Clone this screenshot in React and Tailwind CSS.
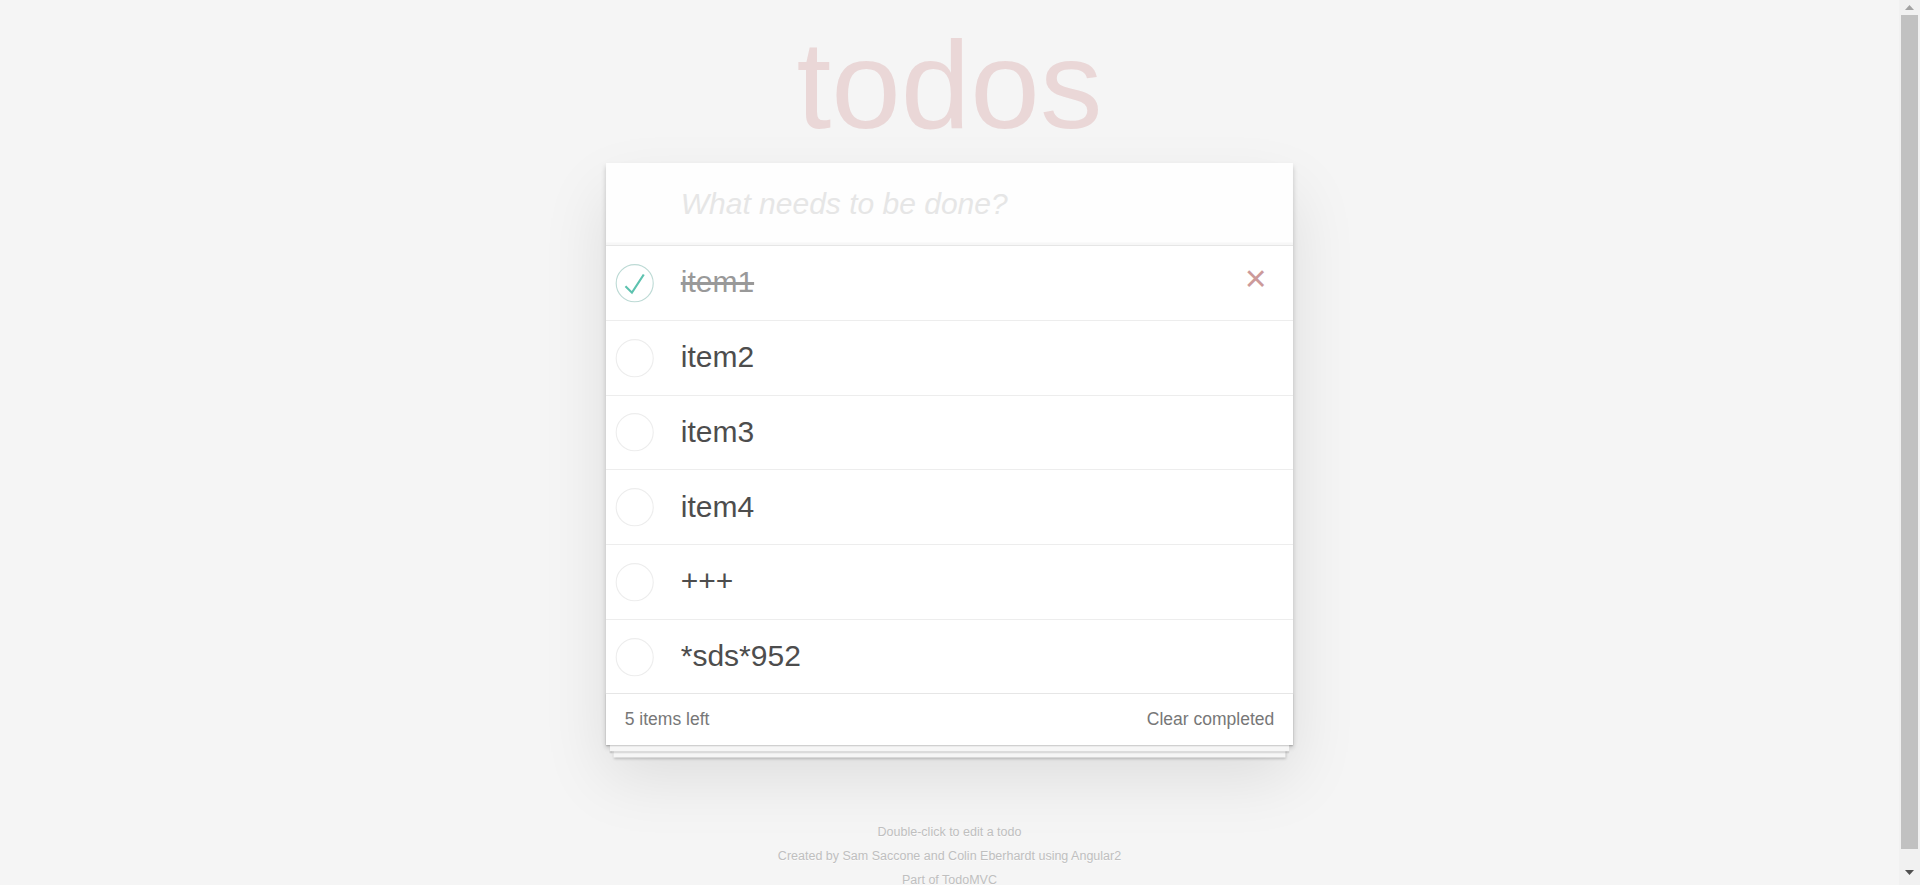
import React, { useState } from 'react';

const initialTodos = [
  { id: 1, title: 'item1', completed: true },
  { id: 2, title: 'item2', completed: false },
  { id: 3, title: 'item3', completed: false },
  { id: 4, title: 'item4', completed: false },
  { id: 5, title: '+++', completed: false },
  { id: 6, title: '*sds*952', completed: false },
];

const Toggle = ({ checked }) => (
  <svg width="50" height="50" viewBox="-10 -18 100 135" className="shrink-0">
    <circle
      cx="50"
      cy="50"
      r="50"
      fill="none"
      stroke={checked ? '#bddad5' : '#ededed'}
      strokeWidth="3"
    />
    {checked && <path fill="#5dc2af" d="M72 25L42 71 27 56l-4 4 20 20 34-52z" />}
  </svg>
);

const TodoItem = ({ todo, isLast, hovered }) => (
  <li
    className={
      'relative flex items-center bg-white ' +
      (isLast ? 'h-[73.5px]' : 'h-[74.75px] border-b-[1.25px] border-[#ededed]')
    }
  >
    <Toggle checked={todo.completed} />
    <label
      className={
        'pl-[25px] pb-[1px] text-[30px] leading-[36px] whitespace-pre ' +
        (todo.completed ? 'text-[#999] line-through' : 'text-[#4d4d4d]')
      }
    >
      {todo.title}
    </label>
    {hovered && (
      <button className="absolute top-[8px] right-[12.5px] w-[50px] h-[50px] flex items-center justify-center text-[37.5px] leading-none text-[#cc9a9a]">
        ×
      </button>
    )}
  </li>
);

const Scrollbar = () => (
  <div className="w-[21px] shrink-0 h-full bg-[#f1f1f1] flex flex-col">
    <div className="h-[15px] flex items-center justify-center">
      <svg width="9" height="5" viewBox="0 0 9 5">
        <path d="M4.5 0L9 5H0z" fill="#a3a3a3" />
      </svg>
    </div>
    <div className="h-[834px] mx-[2px] bg-[#c1c1c1]" />
    <div className="flex-1 flex items-end justify-center pb-[10px]">
      <svg width="9" height="5" viewBox="0 0 9 5">
        <path d="M0 0H9L4.5 5z" fill="#505050" />
      </svg>
    </div>
  </div>
);

export default function App() {
  const [todos] = useState(initialTodos);
  const left = todos.filter((t) => !t.completed).length;

  return (
    <div className="h-[885px] w-full flex overflow-hidden bg-[#f5f5f5] font-['Liberation_Sans',Arial,sans-serif] antialiased">
      <div className="flex-1 min-w-0 flex flex-col items-center pt-[22px]">
        <h1 className="h-[125px] text-[125px] leading-[125px] font-thin text-[rgba(175,47,47,0.15)] mb-[16px]">
          todos
        </h1>

        <section className="w-[687.5px] bg-white shadow-[0_2.5px_5px_0_rgba(0,0,0,0.2),0_31px_62px_0_rgba(0,0,0,0.1)]">
          <header>
            <input
              type="text"
              placeholder="What needs to be done?"
              className="block w-full h-[82px] pl-[75px] pr-[20px] text-[30px] leading-[42px] text-[#4d4d4d] bg-[rgba(0,0,0,0.003)] outline-none shadow-[inset_0_-2.5px_1.25px_rgba(0,0,0,0.03)] placeholder:italic placeholder:text-[#e6e6e6]"
            />
          </header>

          <ul className="border-t-[1.25px] border-[#e6e6e6]">
            {todos.map((todo, i) => (
              <TodoItem key={todo.id} todo={todo} isLast={i === todos.length - 1} hovered={i === 0} />
            ))}
          </ul>

          <footer className="h-[51.25px] px-[19px] flex items-center justify-between border-t-[1.25px] border-[#e6e6e6] text-[17.5px] leading-[25px] text-[#777] shadow-[0_1.25px_1.25px_rgba(0,0,0,0.2),0_10px_0_-3.75px_#f6f6f6,0_11.25px_1.25px_-3.75px_rgba(0,0,0,0.2),0_20px_0_-7.5px_#f6f6f6,0_21.25px_2.5px_-7.5px_rgba(0,0,0,0.2)]">
            <span>{left} items left</span>
            <button className="text-[#777]">Clear completed</button>
          </footer>
        </section>

        <div className="mt-[81.5px] flex flex-col items-center gap-[11.5px] text-[12.5px] leading-[12.5px] text-[#bfbfbf] [text-shadow:0_1.25px_0_rgba(255,255,255,0.5)]">
          <p>Double-click to edit a todo</p>
          <p>Created by Sam Saccone and Colin Eberhardt using Angular2</p>
          <p>Part of TodoMVC</p>
        </div>
      </div>
      <Scrollbar />
    </div>
  );
}
